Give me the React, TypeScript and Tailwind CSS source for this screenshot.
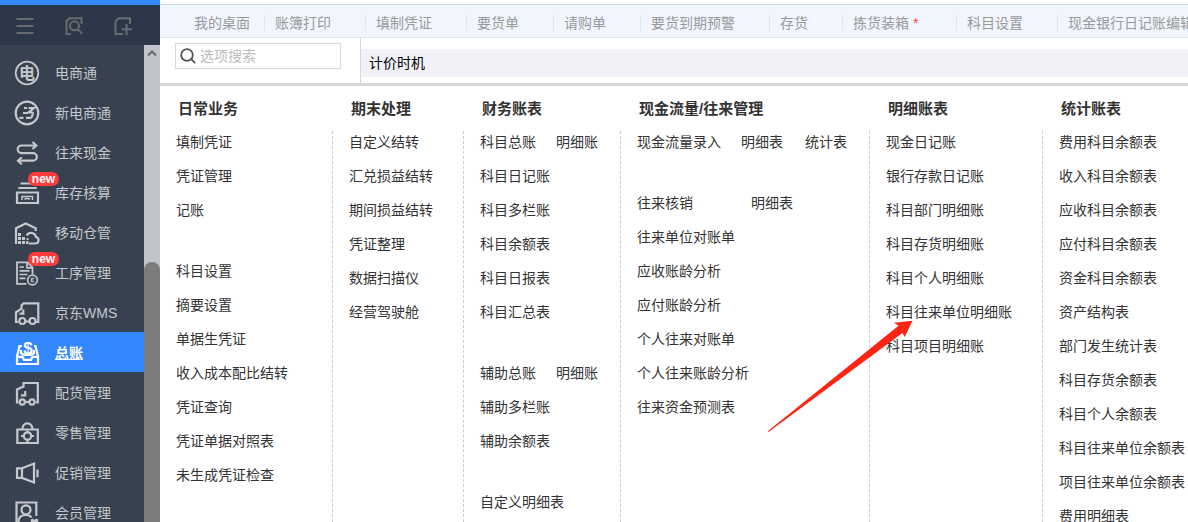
import { ReactNode } from "react";
import clsx from "clsx";

interface NavItem {
  label: string;
  icon: ReactNode;
  isNew?: boolean;
  active?: boolean;
}

interface MenuLink {
  label: string;
  className?: string;
}

interface MenuColumn {
  title: string;
  className: string;
  // an empty row is a blank separator between groups
  rows: (string | MenuLink[])[];
}

const navItems: NavItem[] = [
  {
    label: "电商通",
    icon: (
      <>
        <circle cx="13" cy="13" r="11.3" strokeWidth="1.800" />
        <text x="13" y="18.500" textAnchor="middle" fontSize="16" fontWeight="700" fill="currentColor" stroke="none">电</text>
      </>
    ),
  },
  {
    label: "新电商通",
    icon: (
      <>
        <circle cx="13" cy="13" r="11.3" />
        <path d="M10 8h3M14.500 8H20l-5.500 4.500H18c1 0 1 .5.8 1.300l-.8 2.700c-.3 1-.8 1.300-1.800 1.300H12M9 13h5M5.500 17.800h4" />
      </>
    ),
  },
  {
    label: "往来现金",
    icon: (
      <>
        <path d="M21 5.500H7.500a3.800 3.800 0 0 0 0 7.600H19a3.800 3.800 0 0 1 0 7.600H5" />
        <path d="M18.500 2 22.300 5.500 18.500 9M7.800 17.200 4 20.700l3.800 3.500" />
      </>
    ),
  },
  {
    label: "库存核算",
    isNew: true,
    icon: (
      <>
        <path d="M6.500 3.500h13M4.300 8h18.400" />
        <path d="M3 12.500h21v10.500H3z" />
        <path d="M8 20v-3.500h10.500V20M10.500 19.500c1-1.300 4.500-1.300 5.500 0" strokeWidth="1.500" />
      </>
    ),
  },
  {
    label: "移动仓管",
    icon: (
      <>
        <path d="M2 24V8.300l9.700-4.800 10 4.800V11" />
        <path d="M15 23.500h6.500a3.300 3.300 0 0 0 .5-6.500 5 5 0 0 0-9.300-1.500" />
        <path d="M4 13h3v3H4zM4 17h3v3H4zM8 17h3v3H8zM4 21h3v3H4zM8 21h3v3H8zM12 21h2.500v3H12zM12.500 18h2v2h-2z" fill="currentColor" stroke="none" />
      </>
    ),
  },
  {
    label: "工序管理",
    isNew: true,
    icon: (
      <>
        <path d="M12.500 23.800H3V2.300h10.500l5 5v7" strokeWidth="1.800" />
        <path d="M13 2.500v5.300h5.500M5.500 7h4.500M5.500 10.800h10M5.500 14.500h8M5.500 18.300h6" strokeWidth="1.700" />
        <circle cx="18.500" cy="20" r="4.800" strokeWidth="1.700" />
        <path d="M20.300 18.300h-3v3.500h3M17.300 20h2.200" strokeWidth="1" />
      </>
    ),
  },
  {
    label: "京东WMS",
    icon: (
      <>
        <path d="M4 22H2V12.200l5.500-3.500V5.500L9.500 3.300h14.800V22H22M11.500 21.500h4" />
        <path d="M9.300 9.500v4.200H5.500" />
        <circle cx="8.300" cy="21" r="3" />
        <circle cx="18.500" cy="21" r="3" />
      </>
    ),
  },
  {
    label: "总账",
    active: true,
    icon: (
      <>
        <path d="M8 6H5.500L3 16.500V24h21v-7.500L21.500 6H20" />
        <path d="M3 16.800h5.500l1.500 3h7l1.500-3H24M7 10v3c2 2.500 11 2.500 13 0v-3" />
        <text x="14" y="13.500" textAnchor="middle" fontSize="17" fontWeight="700" fill="currentColor" stroke="none">$</text>
      </>
    ),
  },
  {
    label: "配货管理",
    icon: (
      <>
        <path d="M4.500 22.500H3v-13l6.500-3V3h14.300v19.500H22M12 22h3" />
        <path d="M11.200 11v4.300H7" />
        <circle cx="8.300" cy="22" r="2.600" />
        <circle cx="18" cy="22" r="2.600" />
      </>
    ),
  },
  {
    label: "零售管理",
    icon: (
      <>
        <path d="M3.300 9.500h20.500V23H3.300zM8.300 9a5 5.500 0 0 1 10.200 0" />
        <circle cx="13.500" cy="16" r="3.700" />
        <path d="M13.500 10.500v2M13.500 19.500V22M7 16h3M17 16h3" />
      </>
    ),
  },
  {
    label: "促销管理",
    icon: <path d="M8 8.300H3v9.600h5zM8 8.300 20 3.500v19L8 17.900M23.500 9.500v7.700" />,
  },
  {
    label: "会员管理",
    icon: (
      <>
        <path d="M15 23.500H2.500V2.500h19.800V16" />
        <circle cx="12" cy="9.800" r="4.500" />
        <path d="M4.500 22c0-4.500 3-7 7.500-7 2.500 0 4.500.8 5.500 2.500" />
        <path d="M20.500 25.500 17 22c-1.500-3 2-4.500 3.500-2 1.500-2.500 5-1 3.500 2z" fill="currentColor" stroke="none" />
      </>
    ),
  },
];

const tabs = ["我的桌面", "账簿打印", "填制凭证", "要货单", "请购单", "要货到期预警", "存货", "拣货装箱", "科目设置", "现金银行日记账编辑"];

const columns: MenuColumn[] = [
  {
    title: "日常业务",
    className: "w-[173px]",
    rows: ["填制凭证", "凭证管理", "记账", "", "科目设置", "摘要设置", "单据生凭证", "收入成本配比结转", "凭证查询", "凭证单据对照表", "未生成凭证检查"],
  },
  {
    title: "期末处理",
    className: "w-[131px]",
    rows: ["自定义结转", "汇兑损益结转", "期间损益结转", "凭证整理", "数据扫描仪", "经营驾驶舱"],
  },
  {
    title: "财务账表",
    className: "w-[157px]",
    rows: [
      [{ label: "科目总账" }, { label: "明细账", className: "ml-5" }],
      "科目日记账",
      "科目多栏账",
      "科目余额表",
      "科目日报表",
      "科目汇总表",
      "",
      [{ label: "辅助总账" }, { label: "明细账", className: "ml-5" }],
      "辅助多栏账",
      "辅助余额表",
      "",
      "自定义明细表",
    ],
  },
  {
    title: "现金流量/往来管理",
    className: "w-[249px]",
    rows: [
      [{ label: "现金流量录入" }, { label: "明细表", className: "ml-5" }, { label: "统计表", className: "ml-[22px]" }],
      "",
      [{ label: "往来核销" }, { label: "明细表", className: "ml-[58px]" }],
      "往来单位对账单",
      "应收账龄分析",
      "应付账龄分析",
      "个人往来对账单",
      "个人往来账龄分析",
      "往来资金预测表",
    ],
  },
  {
    title: "明细账表",
    className: "w-[173px]",
    rows: ["现金日记账", "银行存款日记账", "科目部门明细账", "科目存货明细账", "科目个人明细账", "科目往来单位明细账", "科目项目明细账"],
  },
  {
    title: "统计账表",
    className: "w-[173px]",
    rows: ["费用科目余额表", "收入科目余额表", "应收科目余额表", "应付科目余额表", "资金科目余额表", "资产结构表", "部门发生统计表", "科目存货余额表", "科目个人余额表", "科目往来单位余额表", "项目往来单位余额表", "费用明细表"],
  },
];

const ToolButton = ({ label, children }: { label: string; children: ReactNode }) => (
  <button type="button" aria-label={label} className="size-5 text-[#696c6e]">
    <svg viewBox="0 0 20 20" className="size-5" fill="none" stroke="currentColor" strokeWidth="2">
      {children}
    </svg>
  </button>
);

const Sidebar = () => (
  <aside className="flex w-40 shrink-0 flex-col border-t-[5px] border-[#3388ff] bg-[#37414f]">
    <div className="flex h-10 shrink-0 items-center gap-[29px] bg-[#2d374a] px-[15px] pt-0.5">
      <ToolButton label="菜单">
        <path d="M1.500 3h17M1.500 10h17M1.500 17h17" />
      </ToolButton>
      <ToolButton label="查找">
        <path d="M7 18H2.500V5L5.500 2.300h12V8" />
        <circle cx="10.500" cy="9.800" r="4.500" />
        <path d="m13.800 13.300 4.200 4.200" />
      </ToolButton>
      <ToolButton label="新建">
        <path d="M10 18H2.500V5.500L5.500 2.300h11.500V8M13.500 8v11M8.500 13.300h10.500" />
      </ToolButton>
    </div>
    <div className="flex min-h-0 flex-1">
      <nav className="flex-1 overflow-hidden pt-[7px]">
        {navItems.map((item) => (
          <a
            key={item.label}
            href="#"
            className={clsx(
              "relative flex h-10 items-center gap-[15px] pt-0.5 pl-3.5",
              item.active ? "bg-[#3388ff] font-bold text-white underline" : "text-[#c5c8cc]"
            )}
          >
            <svg viewBox="0 0 26 26" className="size-[26px] shrink-0" fill="none" stroke="currentColor" strokeWidth="2.200">
              {item.icon}
            </svg>
            {item.label}
            {item.isNew && (
              <span className="absolute top-0 left-7 h-3.5 w-[31px] rounded-full bg-[#ff3b3b] text-center text-xs leading-3.5 font-bold text-white">
                new
              </span>
            )}
          </a>
        ))}
      </nav>
      <div className="flex w-4 flex-col bg-[#c1c4c9]">
        <button type="button" aria-label="向上滚动" className="flex h-4 items-center justify-center text-[#66686b]">
          <svg viewBox="0 0 10 6" className="h-1.5 w-2.5" fill="none" stroke="currentColor" strokeWidth="2">
            <path d="m1 5.500 4-4 4 4" />
          </svg>
        </button>
        <div className="mt-[201px] flex-1 rounded-t-full bg-[#7c7c7c]" />
      </div>
    </div>
  </aside>
);

const TabBar = () => (
  <nav className="mt-1 flex h-[34px] shrink-0 items-center overflow-hidden border-y border-t-[#d9d9d9] border-b-[#e2e5ec] bg-[#f1f6fe] pt-1 pl-6 text-[#999]">
    {tabs.map((tab, i) => (
      <a
        key={tab}
        href="#"
        className={clsx("flex h-4 shrink-0 items-center border-r border-[#dfe3ea] pl-2.5", i === 0 ? "pr-3.5" : "pr-[34px]")}
      >
        {tab}
        {tab === "拣货装箱" && <span className="w-[13px] pl-1 text-[#ff3b3b]">*</span>}
      </a>
    ))}
  </nav>
);

const SearchRow = () => (
  <div className="flex h-12 shrink-0 border-b-[3px] border-[#d8d8d8]">
    <div className="w-[201px] border-r border-[#d8d8d8] pt-[5px] pl-[15px]">
      <label className="flex h-[26px] w-[166px] items-center gap-1 border border-[#d9d9d9] pl-1">
        <svg viewBox="0 0 16 16" className="size-4 shrink-0 text-[#555]" fill="none" stroke="currentColor" strokeWidth="1.800">
          <circle cx="7" cy="7" r="5.800" />
          <path d="m11.200 11.200 4 4" />
        </svg>
        <input aria-label="选项搜索" placeholder="选项搜索" className="w-full min-w-0 outline-none placeholder:text-[#bbb]" />
      </label>
    </div>
    <div className="mt-[11px] flex h-7 flex-1 items-center bg-[#f1f2f7] pl-2 text-black">计价时机</div>
  </div>
);

const Arrow = () => (
  <svg viewBox="0 0 146 112" className="pointer-events-none absolute top-[234px] left-[607px] h-28 w-[146px]" fill="#ff2514">
    <path d="M145.500.700 127 2.700l4.500 3L1 111l.5 1L135.500 13l2.200 4z" />
  </svg>
);

const MegaMenu = () => (
  <div className="relative flex min-h-0 flex-1 overflow-hidden text-[#333]">
    {columns.map((col, i) => (
      <section key={col.title} className={clsx("flex shrink-0 flex-col", col.className)}>
        <h2 className="h-[45px] shrink-0 pl-[18px] text-[15px] leading-[45px] font-bold">{col.title}</h2>
        <ul className={clsx("min-h-0 flex-1 pl-4", i < columns.length - 1 && "border-r border-dashed border-[#ccc]")}>
          {col.rows.map((row, n) => {
            if (!row) return <li key={n} aria-hidden="true" className="h-[27px]" />;
            const links: MenuLink[] = typeof row === "string" ? [{ label: row }] : row;
            return (
              <li key={n} className="mb-3 flex leading-[22px] whitespace-nowrap">
                {links.map((link) => (
                  <a key={link.label} href="#" className={link.className}>{link.label}</a>
                ))}
              </li>
            );
          })}
        </ul>
      </section>
    ))}
    <Arrow />
  </div>
);

export default function App() {
  return (
    <div className="flex h-screen overflow-hidden bg-white font-['Liberation_Sans','Noto_Sans_CJK_SC',sans-serif] text-sm">
      <Sidebar />
      <main className="flex min-w-0 flex-1 flex-col">
        <TabBar />
        <SearchRow />
        <MegaMenu />
      </main>
    </div>
  );
}
